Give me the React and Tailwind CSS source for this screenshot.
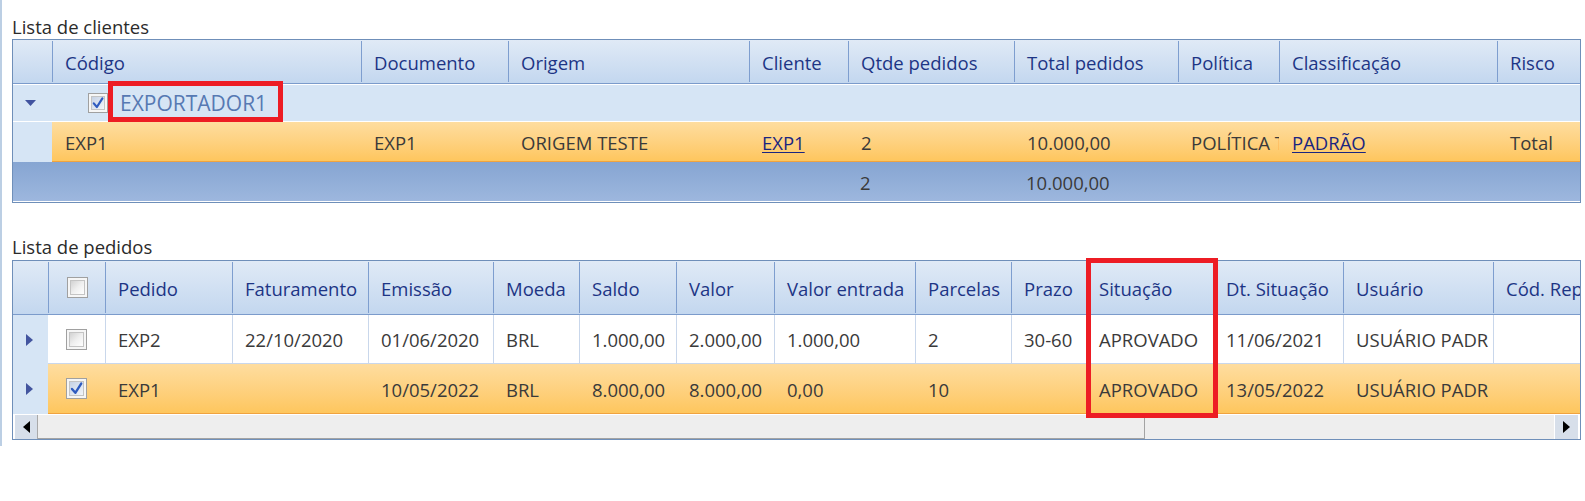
import React from "react";

const F = "font-['Open_Sans',sans-serif]";

function Box({ checked = false, size = "w-[21px] h-[21px]" }) {
  return (
    <div className={`${size} shrink-0 border border-[#a0a0a0] bg-[#f6f6f6] p-[2px]`}>
      <div
        className={`relative w-full h-full border border-[#c4c4c4] ${
          checked
            ? "bg-linear-to-br from-[#c6d2e5] to-[#f2f5fa]"
            : "bg-linear-to-br from-[#d2d2d2] via-[#efefef] to-[#ffffff]"
        }`}
      >
        {checked && (
          <svg viewBox="0 0 14 14" className="absolute inset-[-1px] w-[calc(100%+2px)] h-[calc(100%+2px)]">
            <path
              d="M2.8 7.4 L5.9 11 L11.4 2.4"
              fill="none"
              stroke="#2f5bbf"
              strokeWidth="2.2"
              strokeLinecap="round"
              strokeLinejoin="round"
            />
          </svg>
        )}
      </div>
    </div>
  );
}

const DownTri = () => (
  <svg width="11" height="6" viewBox="0 0 11 6">
    <polygon points="0,0 11,0 5.5,6" fill="#41539f" />
  </svg>
);
const RightTri = () => (
  <svg width="7" height="12" viewBox="0 0 7 12">
    <polygon points="0,0 7,6 0,12" fill="#43559f" />
  </svg>
);

const cols1 = [
  { w: "w-[309px]", label: "Código", data: "EXP1" },
  { w: "w-[147px]", label: "Documento", data: "EXP1" },
  { w: "w-[241px]", label: "Origem", data: "ORIGEM TESTE" },
  { w: "w-[99px]", label: "Cliente", data: "EXP1", link: true },
  { w: "w-[166px]", label: "Qtde pedidos", data: "2", foot: "2" },
  { w: "w-[164px]", label: "Total pedidos", data: "10.000,00", foot: "10.000,00" },
  { w: "w-[101px]", label: "Política", data: "POLÍTICA TESTE" },
  { w: "w-[218px]", label: "Classificação", data: "PADRÃO", link: true },
  { w: "w-[83px]", label: "Risco", data: "Total" },
];

const cols2 = [
  { w: "w-[127px]", label: "Pedido", r1: "EXP2", r2: "EXP1" },
  { w: "w-[136px]", label: "Faturamento", r1: "22/10/2020", r2: "" },
  { w: "w-[125px]", label: "Emissão", r1: "01/06/2020", r2: "10/05/2022" },
  { w: "w-[86px]", label: "Moeda", r1: "BRL", r2: "BRL" },
  { w: "w-[97px]", label: "Saldo", r1: "1.000,00", r2: "8.000,00" },
  { w: "w-[98px]", label: "Valor", r1: "2.000,00", r2: "8.000,00" },
  { w: "w-[141px]", label: "Valor entrada", r1: "1.000,00", r2: "0,00" },
  { w: "w-[96px]", label: "Parcelas", r1: "2", r2: "10" },
  { w: "w-[75px]", label: "Prazo", r1: "30-60", r2: "" },
  { w: "w-[127px]", label: "Situação", r1: "APROVADO", r2: "APROVADO" },
  { w: "w-[130px]", label: "Dt. Situação", r1: "11/06/2021", r2: "13/05/2022" },
  { w: "w-[150px]", label: "Usuário", r1: "USUÁRIO PADR", r2: "USUÁRIO PADR" },
  { w: "w-[87px]", label: "Cód. Representante", r1: "", r2: "" },
];

const headBg = "bg-linear-to-b from-[#e0eaf6] to-[#c3d7ef]";
const orangeBg = "bg-linear-to-b from-[#fedd9f] to-[#fec65d]";
const lightBlue = "bg-[#d6e5f5]";

function HeadCell({ w, children }) {
  return (
    <div
      className={`${w} shrink-0 flex items-center my-[1px] pt-[3px] border-l border-[#7e9ecf] pl-[12px] overflow-hidden whitespace-nowrap text-[#1d3585]`}
    >
      {children}
    </div>
  );
}

function ClientesTable() {
  return (
    <div className="w-[1569px] border border-[#6f8fb9] overflow-hidden text-[18.5px] leading-none">
      {/* header */}
      <div className={`flex h-[44px] border-b border-[#7b9bcb] ${headBg}`}>
        <div className="w-[39px] shrink-0" />
        {cols1.map((c) => (
          <HeadCell key={c.label} w={c.w}>
            {c.label}
          </HeadCell>
        ))}
      </div>
      {/* group row */}
      <div className={`flex items-center h-[38px] border-t border-white border-b border-[#8aa7d3] ${lightBlue}`}>
        <div className="w-[39px] shrink-0 pl-[12px] flex items-center">
          <DownTri />
        </div>
        <div className="pl-[36px] flex items-center">
          <Box checked size="w-[20px] h-[20px]" />
          <span className="ml-[12px] text-[21px] text-[#5679b3]">EXPORTADOR1</span>
        </div>
      </div>
      {/* data row */}
      <div className="flex h-[40px]">
        <div className={`w-[39px] shrink-0 ${lightBlue}`} />
        <div className={`flex flex-1 border-b border-[#f0a33f] ${orangeBg} text-[#3a3a3a]`}>
          {cols1.map((c) => (
            <div
              key={c.label}
              className={`${c.w} shrink-0 flex items-center pt-[3px] pl-[13px] overflow-hidden whitespace-nowrap`}
            >
              {c.link ? (
                <span className="underline text-[#1a2580] underline-offset-2">{c.data}</span>
              ) : (
                c.data
              )}
            </div>
          ))}
        </div>
      </div>
      {/* footer */}
      <div className="flex h-[40px] border-b border-white bg-linear-to-b from-[#86a5d2] to-[#9db7de] text-[#3a3a3a]">
        <div className="w-[39px] shrink-0" />
        {cols1.map((c) => (
          <div key={c.label} className={`${c.w} shrink-0 flex items-center pt-[3px] pl-[12px] overflow-hidden whitespace-nowrap`}>
            {c.foot || ""}
          </div>
        ))}
      </div>
    </div>
  );
}

function PedidosTable() {
  return (
    <div className="w-[1569px] border border-[#6f8fb9] overflow-hidden text-[18.5px] leading-none">
      {/* header */}
      <div className={`flex h-[54px] border-b border-[#7b9bcb] ${headBg}`}>
        <div className="w-[35px] shrink-0" />
        <div className="w-[57px] shrink-0 flex items-center justify-center my-[1px] border-l border-[#7e9ecf]">
          <Box />
        </div>
        {cols2.map((c) => (
          <HeadCell key={c.label} w={c.w}>
            {c.label}
          </HeadCell>
        ))}
      </div>
      {/* row 1 */}
      <div className="flex h-[49px]">
        <div className={`w-[35px] shrink-0 flex items-center pl-[13px] ${lightBlue}`}>
          <RightTri />
        </div>
        <div className="flex flex-1 bg-white border-b border-[#c9d7eb] text-[#3a3a3a]">
          <div className="w-[57px] shrink-0 flex items-center justify-center">
            <Box />
          </div>
          {cols2.map((c) => (
            <div
              key={c.label}
              className={`${c.w} shrink-0 flex items-center pt-[3px] border-l border-[#c9d7eb] pl-[12px] overflow-hidden whitespace-nowrap`}
            >
              {c.r1}
            </div>
          ))}
        </div>
      </div>
      {/* row 2 */}
      <div className="flex h-[50px]">
        <div className={`w-[35px] shrink-0 flex items-center pl-[13px] ${lightBlue}`}>
          <RightTri />
        </div>
        <div className={`flex flex-1 border-b border-[#f0a33f] ${orangeBg} text-[#3a3a3a]`}>
          <div className="w-[57px] shrink-0 flex items-center justify-center">
            <Box checked />
          </div>
          {cols2.map((c) => (
            <div
              key={c.label}
              className={`${c.w} shrink-0 flex items-center pt-[3px] border-l border-transparent pl-[12px] overflow-hidden whitespace-nowrap`}
            >
              {c.r2}
            </div>
          ))}
        </div>
      </div>
      {/* scrollbar */}
      <div className="flex h-[25px] border-t border-white bg-[#eeeeee]">
        <div className="w-[25px] shrink-0 flex items-center justify-center border-l-2 border-white border-r border-r-[#a9a9a9] bg-[#d7dfea]">
          <svg width="7" height="12" viewBox="0 0 7 12">
            <polygon points="7,0 7,12 0,6" fill="#000" />
          </svg>
        </div>
        <div className="w-[1107px] shrink-0 border-r border-b border-[#a3a3a3]" />
        <div className="flex-1" />
        <div className="w-[26px] shrink-0 flex items-center justify-center border-l border-white border-r-2 bg-[#d7dfea]">
          <svg width="7" height="12" viewBox="0 0 7 12">
            <polygon points="0,0 7,6 0,12" fill="#000" />
          </svg>
        </div>
      </div>
    </div>
  );
}

export default function App() {
  return (
    <div className={`relative w-[1585px] h-[501px] bg-white overflow-hidden ${F}`}>
      <div className="h-[446px] border-l-2 border-[#bccfe4] pl-[10px]">
        <div className="pt-[14px] h-[39px] text-[18.5px] leading-[25px] text-[#2b2b2b]">Lista de clientes</div>
        <ClientesTable />
        <div className="mt-[32px] h-[25px] text-[18.5px] leading-[24px] text-[#2b2b2b]">Lista de pedidos</div>
        <PedidosTable />
      </div>
      {/* annotations */}
      <div className="absolute left-[108px] top-[81px] w-[175px] h-[41px] border-[5px] border-[#ed1c24]" />
      <div className="absolute left-[1086px] top-[258px] w-[132px] h-[160px] border-[5px] border-[#ed1c24]" />
    </div>
  );
}
